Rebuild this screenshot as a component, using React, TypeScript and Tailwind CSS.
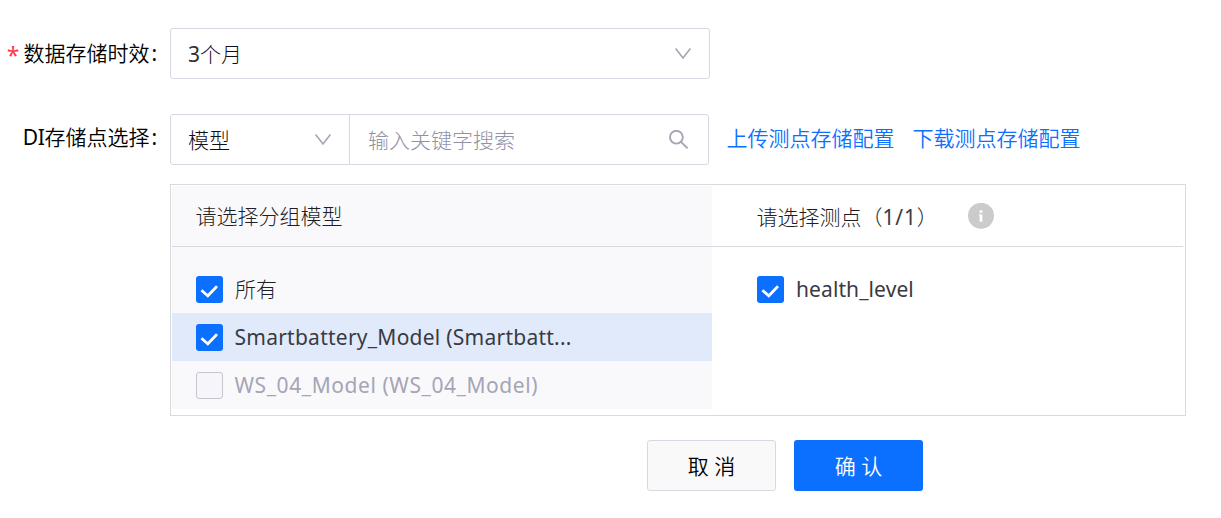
import { ReactNode } from 'react';

function ChevronDown() {
  return (
    <svg className="h-[14px] w-[18px] shrink-0" viewBox="0 0 18 14" fill="none" stroke="#a5a5b5" strokeWidth="1.6">
      <path d="M1.6 1.6 L9 11 L16.4 1.6" />
    </svg>
  );
}

function SearchIcon() {
  return (
    <svg className="size-5 shrink-0" viewBox="0 0 20 20" fill="none" stroke="#a5a5b5" strokeWidth="1.9">
      <circle cx="7.4" cy="7.2" r="6.4" />
      <path d="M12 11.8 L18.6 18.4" />
    </svg>
  );
}

function InfoIcon() {
  return (
    <svg className="size-[26px] shrink-0" viewBox="0 0 26 26">
      <circle cx="13" cy="12.8" r="13" fill="#cbcbcb" />
      <path d="M11.6 7.3h2.8v2.5h-2.8z M11 11.2h3.4v7.6h-2.8v-6h-.6z" fill="#fff" />
    </svg>
  );
}

function Checkbox({ checked = false }: { checked?: boolean }) {
  if (!checked) {
    return <span className="size-[27px] shrink-0 rounded-[3px] border border-[#c6c6d3] bg-[#f5f5fa]" />;
  }
  return (
    <span className="size-[27px] shrink-0 rounded-[3px] bg-[#0b6fff]">
      <svg className="size-[27px]" viewBox="0 0 27 27" fill="none" stroke="#fff" strokeWidth="2.7">
        <path d="M5.4 14.2 L11.8 19.8 L21 10.2" />
      </svg>
    </span>
  );
}

function Label({ required = false, children }: { required?: boolean; children: ReactNode }) {
  return (
    <div className="flex h-[51px] w-[170px] shrink-0 items-center justify-end pr-[11px] text-black">
      {required && <span className="mr-[4px] h-[28px] font-['Noto_Sans'] text-[23px] font-normal text-[#ff3b4b]">*</span>}
      <span>{children}</span>
      <span className="w-[9.5px] pl-[2px] font-normal">:</span>
    </div>
  );
}

export default function App() {
  return (
    <div className="h-[518px] w-[1221px] overflow-hidden bg-white pt-7 font-['Noto_Sans','Noto_Sans_CJK_SC',sans-serif] text-[21px] leading-[32px] font-[350] whitespace-nowrap text-[#30303a]">
      <div className="flex">
        <div className="-mt-px">
          <Label required>数据存储时效</Label>
        </div>
        <div className="flex h-[51px] w-[540px] items-center justify-between rounded-[3px] border border-[#d8d8e2] pr-[17px] pl-[17px]">
          <span className="font-light text-[#101018]"><span className="font-normal text-[#30303a]">3</span>个月</span>
          <ChevronDown />
        </div>
      </div>

      <div className="mt-[35px] flex">
        <div className="-mt-[3px]">
          <Label><span className="font-normal tracking-[-0.4px]">DI</span>存储点选择</Label>
        </div>
        <div className="flex h-[51px] w-[539px] rounded-[3px] border border-[#d8d8e2]">
          <div className="flex w-[179px] items-center justify-between border-r border-[#d8d8e2] pr-[17px] pl-[17px]">
            <span className="font-light text-[#101018]">模型</span>
            <ChevronDown />
          </div>
          <div className="flex flex-1 items-center justify-between pr-[19px] pl-[18px] font-light text-[#9292a5]">
            <span>输入关键字搜索</span>
            <SearchIcon />
          </div>
        </div>
        <div className="flex items-center gap-[18px] pb-1 pl-[17.5px] text-[#0b6fff]">
          <a>上传测点存储配置</a>
          <a>下载测点存储配置</a>
        </div>
      </div>

      <div className="mt-[19px] ml-[170px] flex h-[232px] w-[1016px] border border-[#d9d9de] p-px">
        <div className="h-[223px] w-[540px] bg-[#f9f9fc]">
          <div className="flex h-[61px] items-center border-b border-[#d9d9de] pl-[23.5px] font-light text-[#1e1e26]">请选择分组模型</div>
          <div className="pt-[18px]">
            <div className="flex h-12 items-center gap-3 pl-6">
              <Checkbox checked />
              <span className="font-light text-[#1e1e26]">所有</span>
            </div>
            <div className="flex h-12 items-center gap-[11.5px] bg-[#e0eafb] pl-6">
              <Checkbox checked />
              <span className="font-normal tracking-[0.25px] text-[#3a3a42]">Smartbattery_Model (Smartbatt...</span>
            </div>
            <div className="flex h-12 items-center gap-[11.5px] pl-6 text-[#a5a5b5]">
              <Checkbox />
              <span className="font-normal tracking-[0.57px]">WS_04_Model (WS_04_Model)</span>
            </div>
          </div>
        </div>
        <div className="w-[471px]">
          <div className="flex h-[61px] items-center border-b border-[#d9d9de] pl-[44.5px] font-light text-[#1e1e26]">
            <span className="w-[211px] pt-px">请选择测点（<span className="font-normal tracking-[0.8px] text-[#3a3a42]">1/1</span>）</span>
            <InfoIcon />
          </div>
          <div className="pt-[18px]">
            <div className="flex h-12 items-center gap-3 pl-[45px]">
              <Checkbox checked />
              <span className="font-normal tracking-[0.1px] text-[#3a3a42]">health_level</span>
            </div>
          </div>
        </div>
      </div>

      <div className="mt-6 ml-[647px] flex gap-[18px]">
        <button className="flex h-[51px] w-[129px] items-center justify-center rounded-[3px] border border-[#d8d8e2] bg-[#f9f9f9] text-black">
          取 消
        </button>
        <button className="flex h-[51px] w-[129px] items-center justify-center rounded-[3px] bg-[#0b6fff] text-white">
          确 认
        </button>
      </div>
    </div>
  );
}
